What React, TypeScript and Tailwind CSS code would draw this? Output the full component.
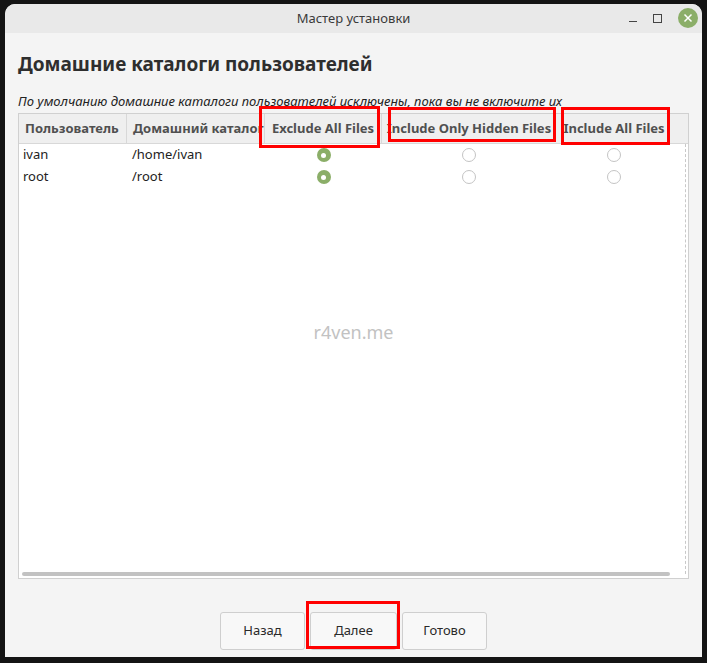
import React from "react";

const users = [
  { name: "ivan", home: "/home/ivan" },
  { name: "root", home: "/root" },
];

function Radio({ checked }: { checked?: boolean }) {
  if (checked) {
    return (
      <span className="inline-flex h-[14px] w-[14px] items-center justify-center rounded-full bg-[#8bae68]">
        <span className="h-[5px] w-[5px] rounded-full bg-white" />
      </span>
    );
  }
  return <span className="inline-block h-[14px] w-[14px] rounded-full border border-[#c4c4c4] bg-white" />;
}

export default function App() {
  const font = { fontFamily: '"Noto Sans", "Open Sans", sans-serif' };
  return (
    <div className="h-[663px] w-[707px] bg-[#141414] pl-[5px] pt-[4px]" style={font}>
      <div className="flex h-[653px] w-[697px] flex-col overflow-hidden rounded-t-[10px] bg-[#f4f4f4]">
        {/* title bar */}
        <div className="relative flex h-[29px] shrink-0 items-center justify-center bg-[#e9e9e9] text-[13px] text-[#3a3a3a]">
          Мастер установки
          <div className="absolute right-[4px] top-[4px] flex items-center gap-[16px]">
            <span className="mt-[6px] block h-[1px] w-[8px] bg-[#444]" />
            <span className="block h-[9px] w-[9px] border border-[#444]" />
            <span className="flex h-[20px] w-[20px] items-center justify-center rounded-full bg-[#8bae68] text-white">
              <svg width="10" height="10" viewBox="0 0 10 10">
                <path d="M1.5 1.5 L8.5 8.5 M8.5 1.5 L1.5 8.5" stroke="white" strokeWidth="1.5" />
              </svg>
            </span>
          </div>
        </div>

        <div className="flex flex-1 flex-col px-[13px]">
          <h1 className="mt-[18px] text-[19px] font-bold leading-[26px] text-[#2e2e2e]">
            Домашние каталоги пользователей
          </h1>
          <p className="mt-[16px] text-[13px] italic leading-[16px] text-[#222]">
            По умолчанию домашние каталоги пользователей исключены, пока вы не включите их
          </p>

          {/* table */}
          <div className="relative mt-[4px] flex h-[466px] w-[671px] flex-col border border-[#d0d0d0] bg-white">
            <div className="flex h-[30px] shrink-0 items-center border-b border-[#d8d8d8] bg-[#efefef] text-[13px] font-bold text-[#505050]">
              <div className="flex h-full w-[108px] items-center border-r border-[#d8d8d8] pl-[6px]">Пользователь</div>
              <div className="flex h-full w-[138px] items-center overflow-hidden whitespace-nowrap border-r border-[#d8d8d8] pl-[6px]">
                Домашний каталог
              </div>
              <div className="flex h-full w-[117px] items-center justify-center border-r border-[#d8d8d8]">Exclude All Files</div>
              <div className="flex h-full w-[174px] items-center justify-center">Include Only Hidden Files</div>
              <div className="flex h-full w-[116px] items-center justify-center">Include All Files</div>
            </div>
            {users.map((u) => (
              <div key={u.name} className="flex h-[22px] items-center text-[13px] text-[#222]">
                <div className="w-[108px] pl-[4px]">{u.name}</div>
                <div className="w-[138px] pl-[5px]">{u.home}</div>
                <div className="flex w-[117px] justify-center"><Radio checked /></div>
                <div className="flex w-[174px] justify-center"><Radio /></div>
                <div className="flex w-[116px] justify-center"><Radio /></div>
              </div>
            ))}
            <div className="flex flex-1 items-center justify-center pb-[96px] text-[18px] text-[#c2c2c2]">
              r4ven.me
            </div>
            <div className="absolute bottom-[4px] right-[2px] top-[30px] w-0 border-l border-dashed border-[#c8c8c8]" />
            <div className="mx-[3px] mb-[2px] h-[4px] w-[648px] rounded-full bg-[#c2c2c2]" />

            {/* annotation boxes */}
            <div className="absolute left-[240px] top-[-8px] h-[42px] w-[121px] border-[3px] border-[#ff0000]" />
            <div className="absolute left-[369px] top-[-7px] h-[35px] w-[168px] border-[3px] border-[#ff0000]" />
            <div className="absolute left-[542px] top-[-7px] h-[38px] w-[109px] border-[3px] border-[#ff0000]" />
          </div>

          {/* buttons */}
          <div className="mt-[33px] flex justify-center gap-[5px] text-[13px] text-[#2a2a2a]">
            <button className="h-[38px] w-[85px] rounded-[3px] border border-[#cfcfcf] bg-[#f8f8f8]">Назад</button>
            <div className="relative">
              <button className="h-[38px] w-[87px] rounded-[3px] border border-[#cfcfcf] bg-[#f8f8f8]">Далее</button>
              <div className="absolute left-[-4px] top-[-11px] h-[48px] w-[94px] border-[3px] border-[#ff0000]" />
            </div>
            <button className="h-[38px] w-[85px] rounded-[3px] border border-[#cfcfcf] bg-[#f8f8f8]">Готово</button>
          </div>
        </div>
      </div>
    </div>
  );
}
